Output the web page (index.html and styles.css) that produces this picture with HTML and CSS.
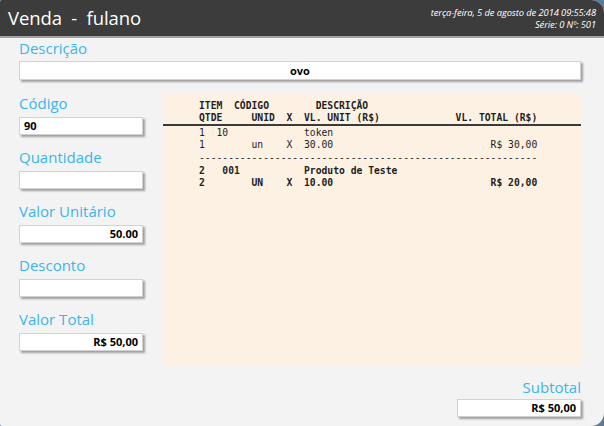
FILE: index.html
```html
<!DOCTYPE html>
<html lang="pt-BR">
<head>
<meta charset="utf-8">
<title>Venda - fulano</title>
<link rel="stylesheet" href="styles.css">
</head>
<body>
<div class="window">
  <header class="titlebar">
    <h1 class="title">Venda&nbsp; - &nbsp;fulano</h1>
    <div class="meta">
      <div>terça-feira, 5 de agosto de 2014 09:55:48</div>
      <div>Série: 0 Nº: 501</div>
    </div>
  </header>
  <main class="content">
    <section class="desc">
      <label class="lbl">Descrição</label>
      <div class="field field-wide center">ovo</div>
    </section>
    <div class="row">
      <div class="left">
        <div class="group"><label class="lbl">Código</label><div class="field">90</div></div>
        <div class="group"><label class="lbl">Quantidade</label><div class="field"></div></div>
        <div class="group"><label class="lbl">Valor Unitário</label><div class="field right">50.00</div></div>
        <div class="group"><label class="lbl">Desconto</label><div class="field"></div></div>
        <div class="group"><label class="lbl">Valor Total</label><div class="field right">R$ 50,00</div></div>
      </div>
      <div class="receipt">
<pre class="rhead bold">ITEM  CÓDIGO        DESCRIÇÃO
QTDE     UNID  X  VL. UNIT (R$)             VL. TOTAL (R$)</pre>
        <div class="rule"></div>
<pre class="ritems">1  10             token
1        un    X  30.00                           R$ 30,00</pre>
<pre class="dashes">----------------------------------------------------------</pre>
<pre class="ritems bold">2   001           Produto de Teste
2        UN    X  10.00                           R$ 20,00</pre>
      </div>
    </div>
    <section class="subtotal">
      <label class="lbl">Subtotal</label>
      <div class="field right">R$ 50,00</div>
    </section>
  </main>
</div>
</body>
</html>
```
FILE: styles.css
```css
* { box-sizing: border-box; }
html, body { margin: 0; padding: 0; }
body {
  width: 604px;
  height: 426px;
  background: #5d7b95;
  overflow: hidden;
  font-family: "Open Sans", "Noto Sans", sans-serif;
}
.window {
  width: 604px;
  height: 426px;
  background: #f3f3f3;
  border-radius: 2px 13px 13px 2px;
  overflow: hidden;
  display: flex;
  flex-direction: column;
}
.titlebar {
  height: 38px;
  background: #3c3c3c;
  border-bottom: 2px solid #a0a0a0;
  display: flex;
  justify-content: space-between;
  align-items: center;
  padding: 0 8px 0 8px;
  color: #fff;
}
.title {
  margin: 0;
  font-weight: 400;
  font-size: 18.5px;
  line-height: 24px;
  letter-spacing: -0.1px;
  padding-bottom: 1px;
}
.meta {
  text-align: right;
  font-style: italic;
  font-size: 9.4px;
  line-height: 12px;
  letter-spacing: -0.1px;
  padding-top: 1px;
}
.content {
  padding: 0 23px 0 19px;
  flex: 1;
  display: flex;
  flex-direction: column;
}
.lbl {
  display: block;
  color: #3cb5ea;
  font-size: 15px;
  line-height: 20px;
  height: 20px;
}
.field {
  background: #fff;
  border: 1px solid #d2d2d2;
  box-shadow: 2px 2px 2px rgba(0,0,0,0.35);
  height: 18px;
  font-size: 11px;
  font-weight: 700;
  line-height: 16px;
  color: #000;
  padding: 0 4px;
}
.center { text-align: center; }
.right { text-align: right; }
.desc .lbl { margin-bottom: 3px; }
.desc .field { height: 19px; line-height: 17px; }
.row {
  display: flex;
  gap: 20px;
  margin-top: 13px;
}
.left {
  width: 124px;
  display: flex;
  flex-direction: column;
  gap: 12px;
}
.group .lbl { margin-bottom: 4px; }
.receipt {
  flex: 1;
  height: 272px;
  background: #fdf1e3;
  padding-top: 7px;
  color: #1e1e1e;
}
.receipt pre {
  margin: 0;
  padding-left: 36px;
  font-family: "DejaVu Sans Mono", "Liberation Mono", monospace;
  font-size: 9.7px;
  line-height: 12px;
}
.receipt .bold { font-weight: 700; }
.rule {
  height: 2px;
  background: #3a3a3a;
  margin-bottom: 1px;
}
.dashes {
  padding-top: 1px;
  height: 14px;
}
.subtotal {
  margin-top: auto;
  margin-bottom: 9px;
  align-self: flex-end;
  width: 124px;
  text-align: right;
}
.subtotal .lbl { margin-bottom: 2px; }
```
